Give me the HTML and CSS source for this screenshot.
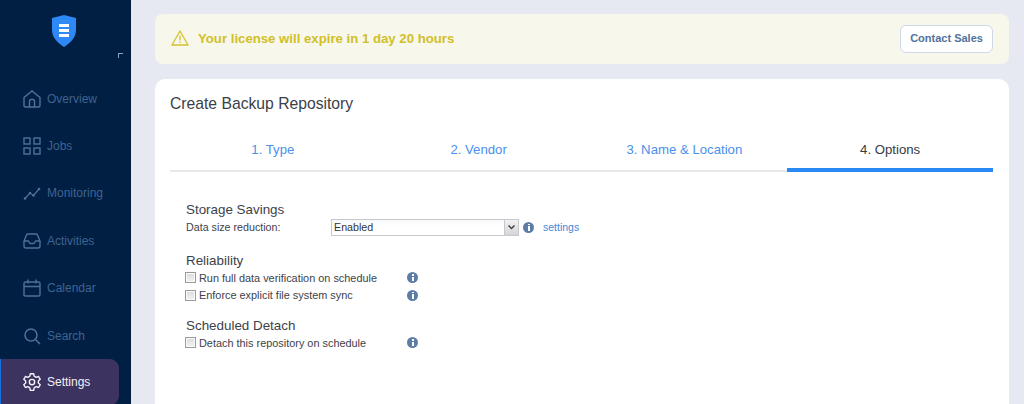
FILE: index.html
```html
<!DOCTYPE html>
<html lang="en">
<head>
<meta charset="utf-8">
<title>Create Backup Repository</title>
<link rel="stylesheet" href="styles.css">
</head>
<body>
<div class="app">
  <aside class="sidebar">
    <div class="logo-row">
      <svg class="logo" width="26" height="32" viewBox="0 0 26 32"><path d="M13 0 L25 3 V15 C25 23 19 28 13 32 C7 28 1 23 1 15 V3 Z" fill="#2e88f5"/><rect x="8" y="9" width="10" height="3" fill="#fff"/><rect x="8" y="14" width="10" height="3" fill="#fff"/><rect x="8" y="19" width="10" height="3" fill="#fff"/></svg>
    </div>
    <div class="collapse-row"><span class="collapse"></span></div>
    <nav class="nav">
      <a class="nav-item"><svg class="ico" viewBox="0 0 18 18" width="18" height="18"><path d="M1 7.5 L9 1 L17 7.5 V15.5 Q17 17 15.5 17 H2.5 Q1 17 1 15.5 Z M6.5 17 V11 Q6.5 9.5 8 9.5 H10 Q11.500 9.5 11.500 11 V17" fill="none" stroke="currentColor" stroke-width="1.4"/></svg><span>Overview</span></a>
      <a class="nav-item"><svg class="ico" viewBox="0 0 18 18" width="18" height="18"><g fill="none" stroke="currentColor" stroke-width="1.4"><rect x="1" y="1" width="6" height="6"/><rect x="11" y="1" width="6" height="6"/><rect x="1" y="11" width="6" height="6"/><rect x="11" y="11" width="6" height="6"/></g></svg><span>Jobs</span></a>
      <a class="nav-item"><svg class="ico" viewBox="0 0 18 18" width="18" height="18"><path d="M2 14.500 L7 9 L10.500 11.500 L16 5" fill="none" stroke="currentColor" stroke-width="1.2"/><circle cx="2" cy="14.500" r="1.300" fill="currentColor"/><circle cx="7" cy="9" r="1.300" fill="currentColor"/><circle cx="10.500" cy="11.500" r="1.300" fill="currentColor"/><circle cx="16" cy="5" r="1.300" fill="currentColor"/></svg><span>Monitoring</span></a>
      <a class="nav-item"><svg class="ico" viewBox="0 0 18 18" width="18" height="18"><path d="M1 9 L3.500 3 Q4 2 5 2 H13 Q14 2 14.500 3 L17 9 V14 Q17 16 15 16 H3 Q1 16 1 14 Z M1 9 H5.500 L7 11.500 H11 L12.500 9 H17" fill="none" stroke="currentColor" stroke-width="1.4" stroke-linejoin="round"/></svg><span>Activities</span></a>
      <a class="nav-item"><svg class="ico" viewBox="0 0 18 18" width="18" height="18"><path d="M2.500 3 H15.500 Q17 3 17 4.500 V16 Q17 17 15.500 17 H2.500 Q1 17 1 16 V4.500 Q1 3 2.500 3 Z M1 7.500 H17 M5 0.500 V4.500 M13 0.500 V4.500" fill="none" stroke="currentColor" stroke-width="1.4"/></svg><span>Calendar</span></a>
      <a class="nav-item"><svg class="ico" viewBox="0 0 18 18" width="18" height="18"><circle cx="8" cy="8" r="6" fill="none" stroke="currentColor" stroke-width="1.5"/><path d="M12.500 12.500 L17 17" stroke="currentColor" stroke-width="1.5"/></svg><span>Search</span></a>
      <a class="nav-item active"><svg class="ico" viewBox="0 0 24 24" width="20" height="20"><path d="M10 2 H14 L14.600 5 L17 6.400 L19.900 5.400 L21.900 8.800 L19.600 10.800 V13.200 L21.900 15.200 L19.900 18.600 L17 17.600 L14.600 19 L14 22 H10 L9.400 19 L7 17.600 L4.100 18.600 L2.100 15.200 L4.400 13.200 V10.800 L2.100 8.800 L4.100 5.400 L7 6.400 L9.400 5 Z" fill="none" stroke="currentColor" stroke-width="1.700" stroke-linejoin="round"/><circle cx="12" cy="12" r="3.200" fill="none" stroke="currentColor" stroke-width="1.700"/></svg><span>Settings</span></a>
    </nav>
  </aside>
  <main class="main">
    <section class="banner">
      <div class="banner-msg">
        <svg width="18" height="16" viewBox="0 0 18 16"><path d="M9 1 L17 15 H1 Z" fill="none" stroke="#d4c22c" stroke-width="1.300" stroke-linejoin="round"/><path d="M9 5.500 V10.500 M9 11.700 V13" stroke="#d4c22c" stroke-width="1.300"/></svg>
        <span>Your license will expire in 1 day 20 hours</span>
      </div>
      <button class="contact">Contact Sales</button>
    </section>
    <section class="card">
      <h1 class="title">Create Backup Repository</h1>
      <div class="tabs">
        <div class="tab">1. Type</div>
        <div class="tab">2. Vendor</div>
        <div class="tab">3. Name &amp; Location</div>
        <div class="tab current">4. Options</div>
      </div>
      <div class="form">
        <div class="group">
          <h2 class="group-title">Storage Savings</h2>
          <div class="row">
            <label class="field-label">Data size reduction:</label>
            <div class="select"><span class="select-value">Enabled</span><span class="select-btn"><svg width="7" height="5" viewBox="0 0 7 5"><path d="M0.500 0.500 L3.500 3.500 L6.500 0.500" fill="none" stroke="#444" stroke-width="1.500"/></svg></span></div>
            <span class="info"></span>
            <a class="link">settings</a>
          </div>
        </div>
        <div class="group">
          <h2 class="group-title">Reliability</h2>
          <div class="check-row"><span class="check"></span><span class="check-label">Run full data verification on schedule</span><span class="info"></span></div>
          <div class="check-row"><span class="check"></span><span class="check-label">Enforce explicit file system sync</span><span class="info"></span></div>
        </div>
        <div class="group">
          <h2 class="group-title">Scheduled Detach</h2>
          <div class="check-row"><span class="check"></span><span class="check-label">Detach this repository on schedule</span><span class="info"></span></div>
        </div>
      </div>
    </section>
  </main>
</div>
</body>
</html>
```
FILE: styles.css
```css
* { box-sizing: border-box; }
html, body { margin: 0; height: 404px; overflow: hidden; }
body { font-family: "Liberation Sans", Arial, sans-serif; background: #e6e9f2; }
.app { display: flex; height: 404px; }

.sidebar { width: 131px; flex: none; background: #001f42; }
.logo-row { display: flex; justify-content: center; padding-top: 15px; padding-right: 3px; }
.logo { display: block; }
.collapse-row { display: flex; justify-content: flex-end; padding: 6px 8px 0 0; }
.collapse { width: 5px; height: 5px; border-left: 1px solid #8ea3bd; border-top: 1px solid #8ea3bd; }
.nav { display: flex; flex-direction: column; margin-top: 17px; }
.nav-item { display: flex; align-items: center; gap: 6px; height: 47.4px; padding-left: 23px; width: 119px; font-size: 12px; color: #3f6391; }
.nav-item .ico { flex: none; color: #4f7299; }
.nav-item.active { height: 46px; border-left: 1px solid #1a6fe0; border-radius: 0 9px 9px 0; background: #3d3360; color: #f2f2f8; padding-left: 21px; gap: 5px; }
.nav-item.active .ico { color: #f2f2f8; }

.main { flex: 1; padding: 14px 15px 0 24px; display: flex; flex-direction: column; gap: 15px; min-width: 0; }
.banner { height: 50px; flex: none; background: #f7f7eb; border-radius: 8px; display: flex; align-items: center; justify-content: space-between; padding: 0 16px 0 16px; }
.banner-msg { display: flex; align-items: center; gap: 9px; font-size: 13.2px; font-weight: 700; color: #d1c029; padding-bottom: 2px; }
.banner-msg svg { display: block; }
.contact { width: 93px; height: 28px; background: #fff; border: 1px solid #cdd9e8; border-radius: 6px; padding: 0 0 2px; font: 700 11px "Liberation Sans", Arial, sans-serif; color: #52719c; }

.card { flex: 1; background: #fff; border-radius: 10px 10px 0 0; padding: 15px 16px 0 15px; }
.title { margin: 0; font-size: 15.700px; font-weight: 400; line-height: 19px; color: #3c4048; }
.tabs { display: flex; margin-top: 18px; height: 41px; border-bottom: 2px solid #e8e8ea; }
.tab { flex: 1; height: 41px; display: flex; align-items: center; justify-content: center; font-size: 13.200px; color: #4a90ee; padding-bottom: 5px; }
.tab.current { color: #333a45; border-bottom: 4px solid #2a8af5; padding-bottom: 1px; }

.form { padding: 29px 0 0 16px; display: flex; flex-direction: column; gap: 13px; }
.group-title { margin: 0; font-size: 13.400px; font-weight: 400; line-height: 17px; color: #3e4249; }
.row { display: flex; align-items: center; height: 18px; margin-bottom: 3px; }
.field-label { width: 145px; font-size: 10.700px; color: #3e4249; }
.select { width: 188px; height: 17px; display: flex; border: 1px solid #c6c8d0; background: linear-gradient(#f8f8f8, #fff 40%); }
.select-value { flex: 1; padding-left: 2px; font-size: 10.700px; line-height: 15px; color: #333; }
.select-btn { width: 14px; flex: none; display: flex; align-items: center; justify-content: center; background: linear-gradient(#f2f2f2, #d5d5d8); border-left: 1px solid #c6c8d0; }
.info { position: relative; width: 11px; height: 11px; border-radius: 50%; background: #5d7da6; flex: none; }
.info::before { content: ""; position: absolute; left: 4.500px; top: 2px; width: 2px; height: 1.500px; background: #fff; }
.info::after { content: ""; position: absolute; left: 4.500px; top: 4.500px; width: 2px; height: 4.500px; background: #fff; }
.row .info { margin-left: 4px; }
.link { margin-left: 9px; font-size: 10.500px; color: #3f86da; }
.check-row { display: flex; align-items: center; height: 17.500px; margin-left: -1px; }
.check { width: 11px; height: 11px; flex: none; border: 1px solid #9a9a9a; background: linear-gradient(#dcdcdc, #f3f3f3); box-shadow: inset 0 0 0 1px #fafafa; }
.check-label { width: 208px; margin-left: 3px; font-size: 10.900px; color: #3e4249; }
```
